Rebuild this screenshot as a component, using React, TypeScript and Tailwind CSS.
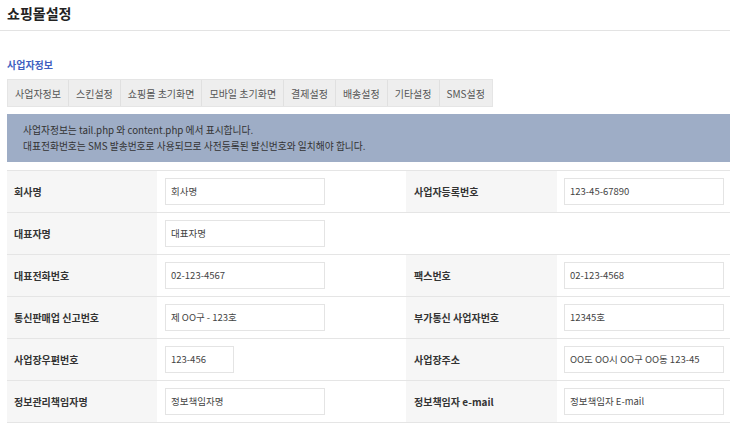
import React from 'react';

const tabs = ['사업자정보', '스킨설정', '쇼핑몰 초기화면', '모바일 초기화면', '결제설정', '배송설정', '기타설정', 'SMS설정'];

type Field = { label: string; value: string; short?: boolean };

const rows: [Field, Field | null][] = [
  [{ label: '회사명', value: '회사명' }, { label: '사업자등록번호', value: '123-45-67890' }],
  [{ label: '대표자명', value: '대표자명' }, null],
  [{ label: '대표전화번호', value: '02-123-4567' }, { label: '팩스번호', value: '02-123-4568' }],
  [{ label: '통신판매업 신고번호', value: '제 OO구 - 123호' }, { label: '부가통신 사업자번호', value: '12345호' }],
  [{ label: '사업장우편번호', value: '123-456', short: true }, { label: '사업장주소', value: 'OO도 OO시 OO구 OO동 123-45' }],
  [{ label: '정보관리책임자명', value: '정보책임자명' }, { label: '정보책임자 e-mail', value: '정보책임자 E-mail' }],
];

const Input = ({ value, short }: { value: string; short?: boolean }) => (
  <div className={`${short ? 'w-[69px]' : 'w-[160px]'} h-[27px] border border-[#e4e4e4] bg-white flex items-center px-[5px] text-[9.5px] text-[#444] whitespace-nowrap overflow-hidden`}>
    {value}
  </div>
);

export default function App() {
  return (
    <div className="w-[730px] h-[433px] bg-white overflow-hidden" style={{ fontFamily: '"Noto Sans CJK KR", "Noto Sans", sans-serif' }}>
      {/* header */}
      <div className="h-[31px] border-b border-[#e3e3e3] px-[7px] flex items-center">
        <h1 className="text-[14px] font-bold text-[#222] leading-none -mt-[5px]">쇼핑몰설정</h1>
      </div>

      <div className="pl-[7px]">
        <h2 className="mt-[29px] text-[10px] font-bold text-[#3f5fbf] leading-none">사업자정보</h2>

        {/* tabs */}
        <div className="mt-[9px] flex w-fit border border-[#e5e5e5] bg-[#eeeeee]">
          {tabs.map((t, i) => (
            <div key={t} className={`h-[26px] flex items-center px-[7px] text-[10px] text-[#555] whitespace-nowrap ${i > 0 ? 'border-l border-[#e0e0e0]' : ''}`}>
              {t}
            </div>
          ))}
        </div>

        {/* notice */}
        <div className="mt-[7px] h-[48px] bg-[#9eadc6] pl-[16px] flex flex-col justify-center gap-[3px] text-[9.75px] text-[#333] leading-[13px]">
          <p>사업자정보는 tail.php 와 content.php 에서 표시합니다.</p>
          <p>대표전화번호는 SMS 발송번호로 사용되므로 사전등록된 발신번호와 일치해야 합니다.</p>
        </div>

        {/* form table */}
        <table className="mt-[8px] w-[723px] border-collapse border-t border-[#e5e5e5] table-fixed">
          <colgroup>
            <col className="w-[150px]" />
            <col className="w-[249px]" />
            <col className="w-[151px]" />
            <col className="w-[173px]" />
          </colgroup>
          <tbody>
            {rows.map(([a, b]) => (
              <tr key={a.label} className="h-[42px] border-b border-[#e5e5e5]">
                <th className="bg-[#f6f6f6] text-left pl-[7px] text-[10px] font-bold text-[#333]">{a.label}</th>
                <td className="pl-[8px]"><Input value={a.value} short={a.short} /></td>
                {b ? (
                  <>
                    <th className="bg-[#f6f6f6] text-left pl-[8px] text-[10px] font-bold text-[#333]">{b.label}</th>
                    <td className="pl-[7px]"><Input value={b.value} /></td>
                  </>
                ) : (
                  <>
                    <td />
                    <td />
                  </>
                )}
              </tr>
            ))}
          </tbody>
        </table>
      </div>
    </div>
  );
}
